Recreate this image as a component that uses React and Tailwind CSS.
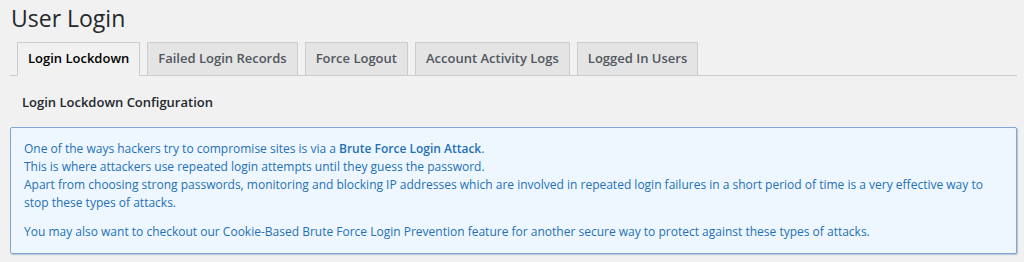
import React from 'react';

const tabs = ['Login Lockdown', 'Failed Login Records', 'Force Logout', 'Account Activity Logs', 'Logged In Users'];

function Tabs({ active }) {
    return (
        <div className="flex items-end gap-[7px] border-b border-[#cccccc] pl-[7px] mr-[7px]">
            {tabs.map((t, i) => (
                <div
                    key={t}
                    className={
                        i === active
                            ? 'h-[34px] -mb-px px-[10px] flex items-center border border-[#cccccc] border-b-[#f1f1f1] bg-[#f1f1f1] text-[#000] font-semibold text-[13px]'
                            : 'h-[33px] px-[10px] flex items-center border border-[#cccccc] border-b-0 bg-[#e4e4e4] text-[#50575e] font-semibold text-[13px]'
                    }
                >
                    {t}
                </div>
            ))}
        </div>
    );
}

export default function App() {
    return (
        <div className="w-[1024px] h-[262px] bg-[#f1f1f1] pl-[10px] pt-[4px]" style={{ fontFamily: '"Open Sans", sans-serif' }}>
            <h1 className="text-[23px] leading-[29px] text-[#23282d] pl-[1px] mb-[9px]">User Login</h1>
            <Tabs active={0} />
            <h2 className="text-[13px] font-semibold text-[#23282d] pl-[12px] mt-[17px] leading-[18px]">Login Lockdown Configuration</h2>

            {/* info box */}
            <div className="mt-[16px] w-[1007px] border border-[#7fa6d8] rounded-[2px] shadow-[1px_1px_1px_rgba(80,110,160,0.35)] bg-[#eef7ff] px-[13px] pt-[12px] pb-[12px] text-[12px] leading-[18px] text-[#2470b6]">
                <p>
                    One of the ways hackers try to compromise sites is via a <strong className="font-semibold">Brute Force Login Attack</strong>.
                    <br />
                    This is where attackers use repeated login attempts until they guess the password.
                    <br />
                    Apart from choosing strong passwords, monitoring and blocking IP addresses which are involved in repeated login failures in a short period of time is a very effective way to stop these types of attacks.
                </p>
                <p className="mt-[11px]">
                    You may also want to checkout our Cookie-Based Brute Force Login Prevention feature for another secure way to protect against these types of attacks.
                </p>
            </div>
        </div>
    );
}
